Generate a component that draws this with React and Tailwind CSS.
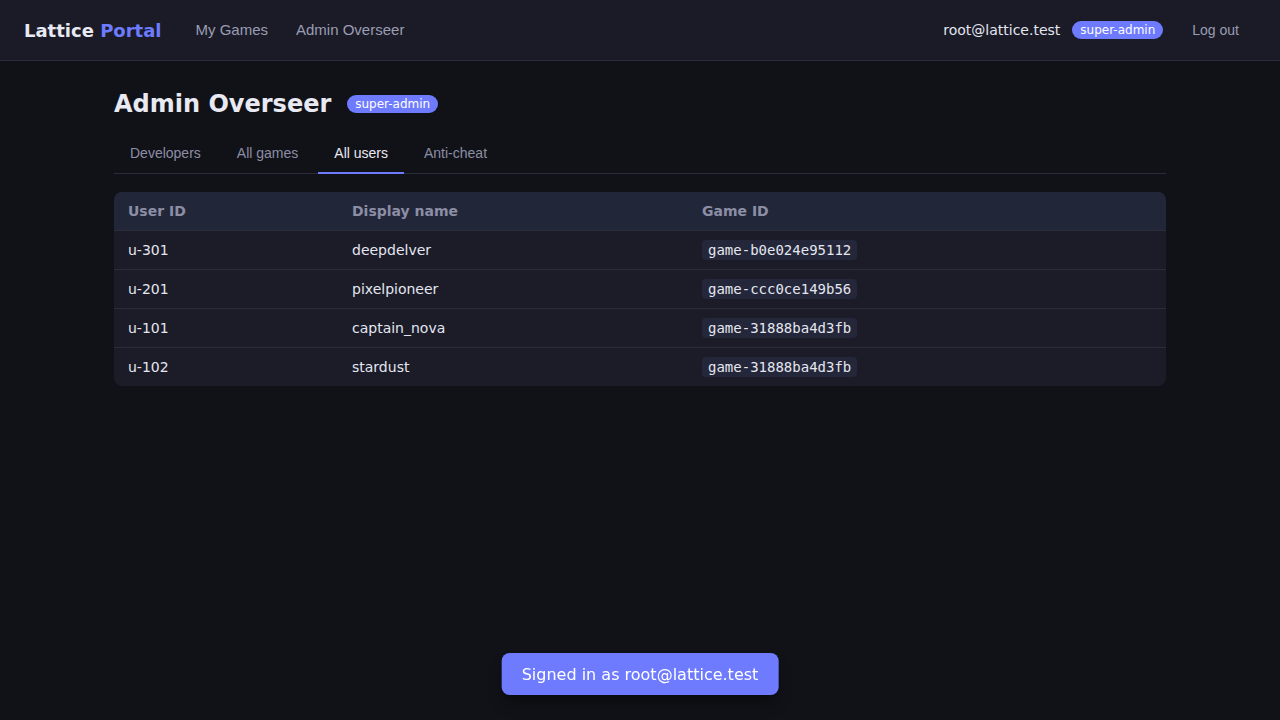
import React from "react";

const rows = [
  ["u-301", "deepdelver", "game-b0e024e95112"],
  ["u-201", "pixelpioneer", "game-ccc0ce149b56"],
  ["u-101", "captain_nova", "game-31888ba4d3fb"],
  ["u-102", "stardust", "game-31888ba4d3fb"],
];

const sans = { fontFamily: '"DejaVu Sans", sans-serif' };
const arial = { fontFamily: '"Liberation Sans", Arial, sans-serif' };
const mono = { fontFamily: '"DejaVu Sans Mono", monospace' };

export default function App() {
  return (
    <div className="min-h-[720px] bg-[#111218] text-[#e4e6f0]" style={sans}>
      <header className="h-[61px] bg-[#1a1b27] border-b border-[#2a2c3c] flex items-center pl-6 pr-[29px]">
        <div className="text-[18px] font-bold text-[#e8e9f2]">
          Lattice <span className="text-[#6e7bff]">Portal</span>
        </div>
        <nav className="flex items-center ml-5" style={arial}>
          <a className="px-[14px] text-[15px] text-[#9a9db3]">My Games</a>
          <a className="px-[14px] text-[15px] text-[#9a9db3]">Admin Overseer</a>
        </nav>
        <div className="ml-auto flex items-center">
          <span className="text-[14px] text-[#e4e6f0]">root@lattice.test</span>
          <span className="ml-3 rounded-full bg-[#6e7bff] text-white text-[12px] px-2 leading-[18px]">super-admin</span>
          <button className="ml-[17px] px-3 text-[14px] text-[#9a9db3]" style={arial}>Log out</button>
        </div>
      </header>

      <main className="max-w-[1100px] mx-auto px-6">
        <div className="flex items-center pt-[28px]">
          <h1 className="text-[24px] font-bold text-[#e8e9f2] leading-[30px]">Admin Overseer</h1>
          <span className="ml-4 rounded-full bg-[#6e7bff] text-white text-[12px] px-2 leading-[18px]">super-admin</span>
        </div>
        <div className="flex gap-1 border-b border-[#2a2c3c] mt-[18px]" style={arial}>
          {["Developers", "All games", "All users", "Anti-cheat"].map((t) => (
            <div
              key={t}
              className={
                "px-4 pb-[2px] h-[37px] flex items-center text-[14px] border-b-2 -mb-px " +
                (t === "All users"
                  ? "text-[#e8e9f2] border-[#6e7bff]"
                  : "text-[#8b8ea5] border-transparent")
              }
            >
              {t}
            </div>
          ))}
        </div>

        <div className="mt-[18px] rounded-lg overflow-hidden bg-[#1b1c28]">
          <table className="w-full text-[14px] border-collapse">
            <thead>
              <tr className="bg-[#222639] h-[38px]">
                <th className="text-left font-bold text-[#8b8ea5] pl-[14px] pt-[2px] w-[224px]">User ID</th>
                <th className="text-left font-bold text-[#8b8ea5] pl-[14px] pt-[2px] w-[350px]">Display name</th>
                <th className="text-left font-bold text-[#8b8ea5] pl-[14px] pt-[2px]">Game ID</th>
              </tr>
            </thead>
            <tbody>
              {rows.map((r, i) => (
                <tr key={i} className="border-t border-[#2a2c3c] h-[39px]">
                  <td className="pl-[14px] pt-[2px] text-[#e4e6f0]">{r[0]}</td>
                  <td className="pl-[14px] pt-[2px] text-[#e4e6f0]">{r[1]}</td>
                  <td className="pl-[14px] pt-[2px]">
                    <code className="inline-block bg-[#242739] rounded px-[6px] leading-[20px] text-[14px] text-[#e4e6f0]" style={mono}>
                      {r[2]}
                    </code>
                  </td>
                </tr>
              ))}
            </tbody>
          </table>
        </div>
      </main>

      <div className="fixed bottom-[25px] left-1/2 -translate-x-1/2 bg-[#6e7bff] text-white text-[16px] rounded-lg px-5 pt-[2px] h-[42px] flex items-center shadow-lg shadow-black/40">
        Signed in as root@lattice.test
      </div>
    </div>
  );
}
